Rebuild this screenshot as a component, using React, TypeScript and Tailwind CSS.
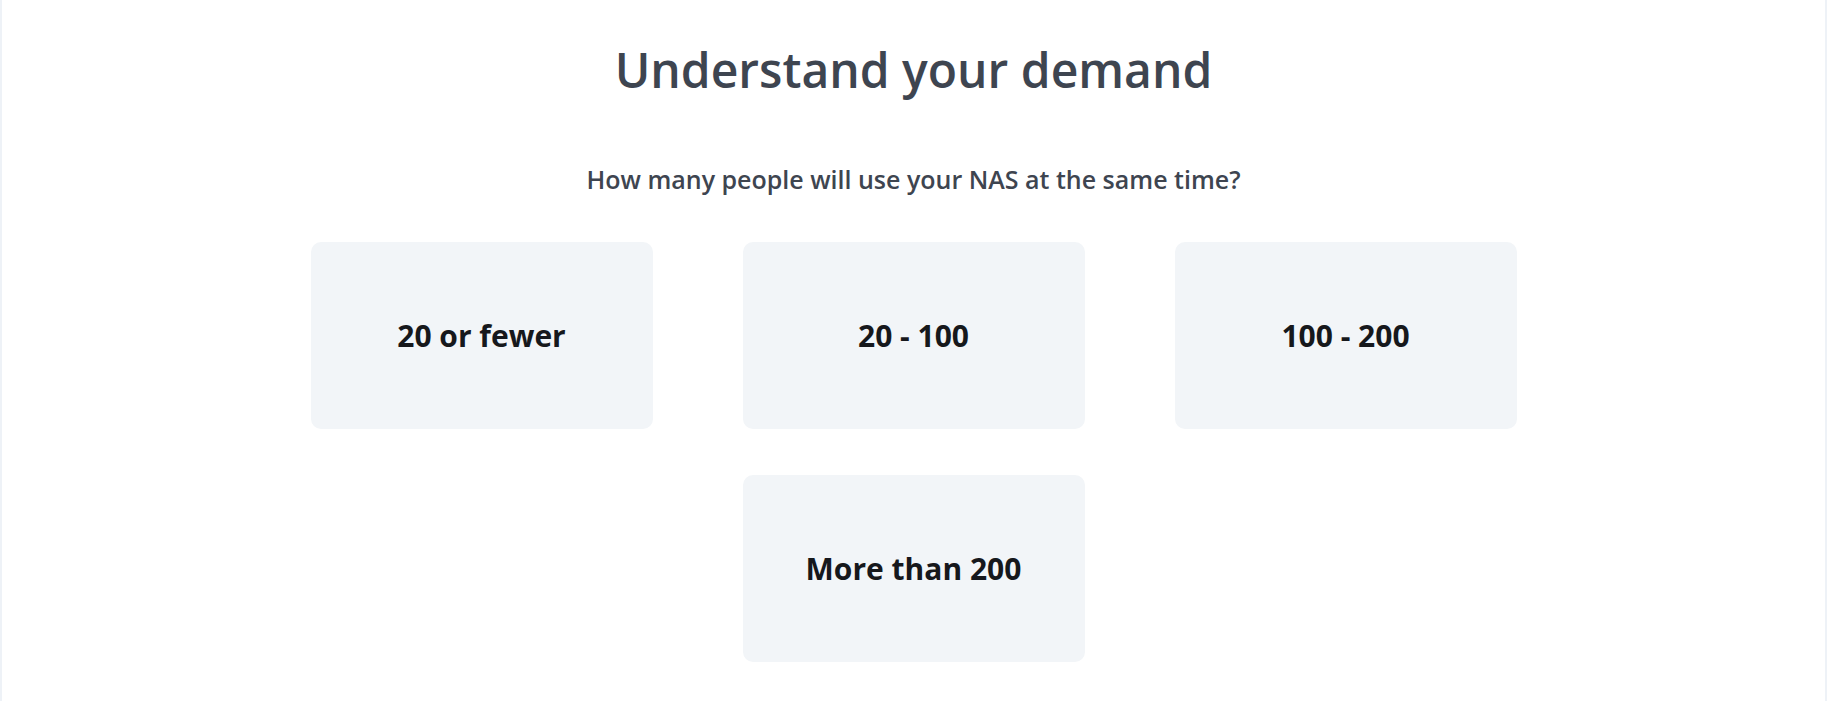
const options = ['20 or fewer', '20 - 100', '100 - 200', 'More than 200']

export default function App() {
  return (
    <div className="min-h-[701px] bg-white border-x-2 border-[#eef2f7] font-['Open_Sans',sans-serif]">
      <div className="pt-[37px] text-center">
        <h1 className="text-[48px] leading-[66px] font-semibold text-[#3e4550]">Understand your demand</h1>
        <p className="mt-[60px] text-[25px] leading-[32px] font-semibold text-[#3e4550]">
          How many people will use your NAS at the same time?
        </p>
      </div>
      <div className="w-[1206px] mx-auto mt-[47px] grid grid-cols-3 gap-x-[90px] gap-y-[46px]">
        {options.map((o, i) => (
          <button
            key={o}
            className={`h-[187px] rounded-[10px] bg-[#f2f5f8] flex items-center justify-center text-[30px] font-bold text-[#16181c] ${i === 3 ? 'col-start-2' : ''}`}
          >
            {o}
          </button>
        ))}
      </div>
    </div>
  )
}
